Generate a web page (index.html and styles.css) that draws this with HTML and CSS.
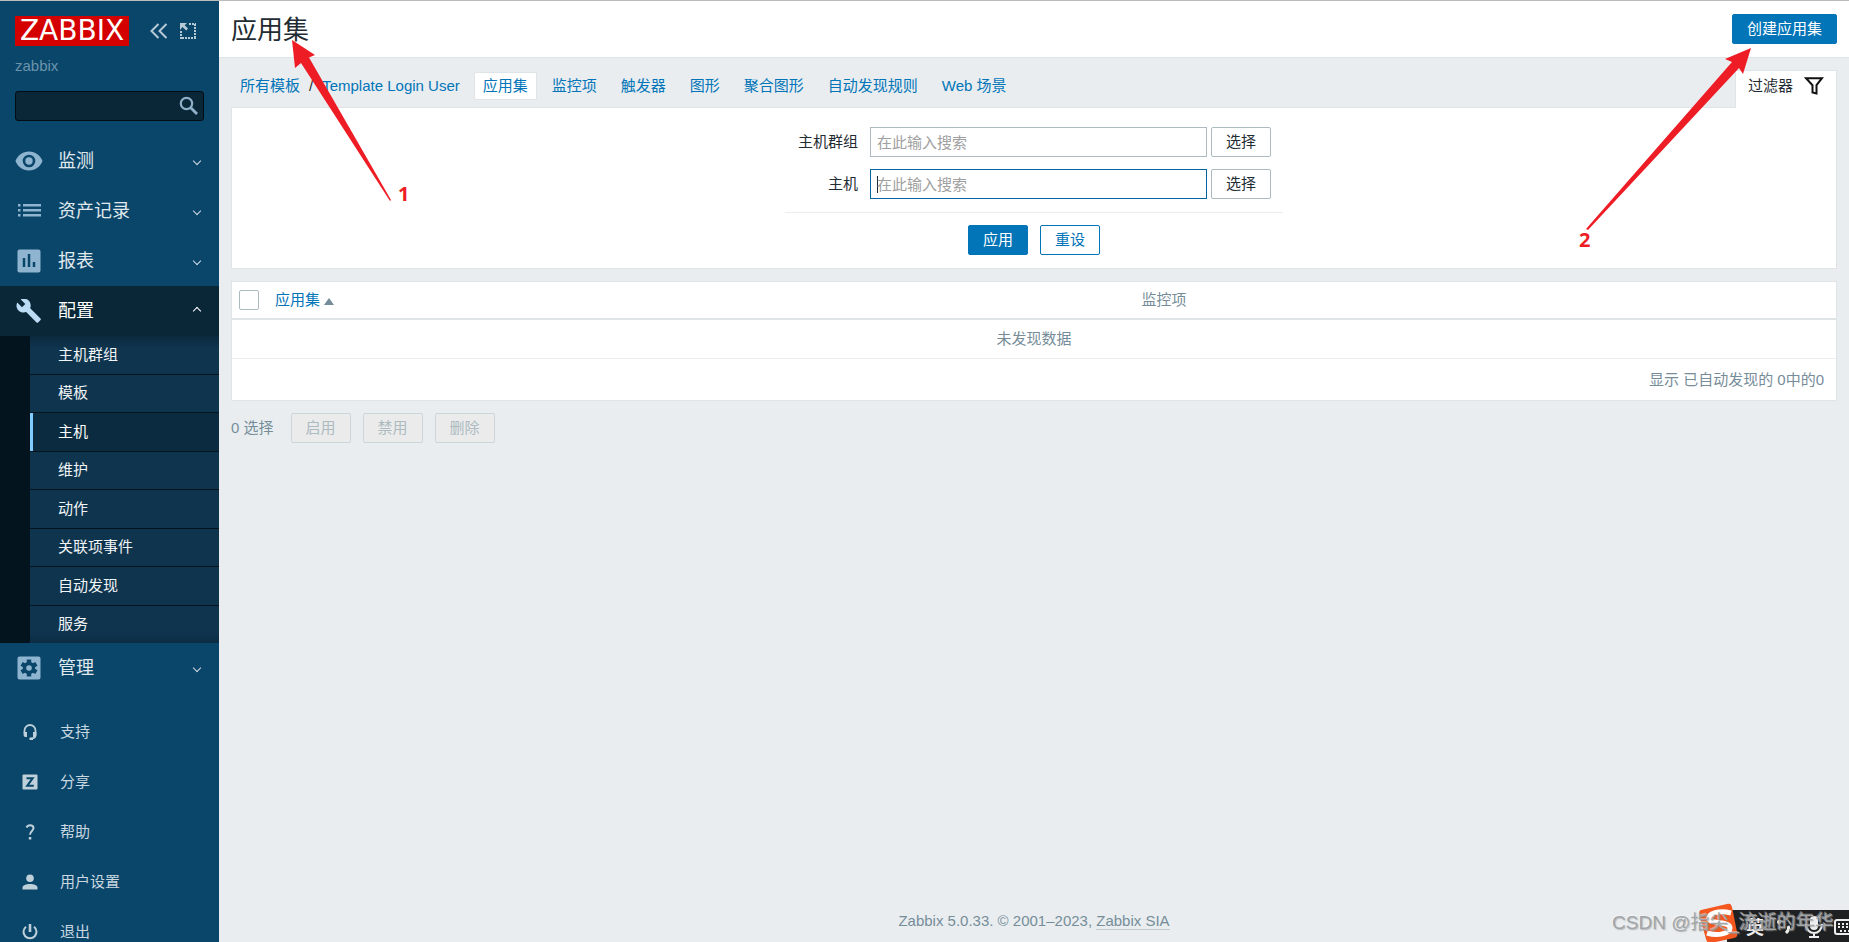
FILE: index.html
```
<!DOCTYPE html>
<html lang="zh-CN">
<head>
<meta charset="utf-8">
<title>应用集</title>
<link rel="stylesheet" href="styles.css">
</head>
<body>
<div class="page">
  <aside class="sidebar">
    <div class="brand">
      <a class="logo" href="#">ZABBIX</a>
      <button class="icon-btn" type="button" aria-label="收起">
        <svg width="18" height="16" viewBox="0 0 18 16" fill="none" stroke="#b6cad6" stroke-width="2"><path d="M8.500 1 1.500 8l7 7M16.500 1l-7 7 7 7"/></svg>
      </button>
      <button class="icon-btn" type="button" aria-label="隐藏">
        <svg width="16" height="16" viewBox="0 0 16 16" fill="none"><path d="M0 0h7L4.700 2.300 8 5.600 6.200 7.400 2.500 4.100 0 7z" fill="#b6cad6"/><path d="M9 1h7M15 1v15M16 15H0M1 16V8" stroke="#b6cad6" stroke-width="2" stroke-dasharray="2 1"/></svg>
      </button>
    </div>
    <div class="server">zabbix</div>
    <form class="search">
      <input class="search-input" type="text" aria-label="搜索">
      <button class="search-btn" type="button" aria-label="搜索">
        <svg width="20" height="20" viewBox="0 0 20 20" fill="none" stroke="#8fb0c9"><circle cx="7.500" cy="7.500" r="5.700" stroke-width="2.200"/><path d="M11.500 11.500l6.500 6.500" stroke-width="2.800"/></svg>
      </button>
    </form>
    <nav>
      <ul class="menu">
        <li><a class="menu-link" href="#">
          <svg width="28" height="20" viewBox="0 0 28 20" fill="#8fb4d0"><path fill-rule="evenodd" d="M14 .5C7.700.5 2.500 4.400.5 10c2 5.600 7.200 9.500 13.500 9.500S25.500 15.600 27.500 10C25.500 4.400 20.300.5 14 .5zm0 15.800a6.300 6.300 0 1 1 0-12.600 6.300 6.300 0 0 1 0 12.600z"/><circle cx="14" cy="10" r="3.700"/></svg>
          <span class="menu-text">监测</span><span class="chevron"></span></a></li>
        <li><a class="menu-link" href="#">
          <svg width="28" height="24" viewBox="0 0 28 24" fill="#8fb4d0"><path d="M3 5h2.500v2.500H3zm0 5h2.500v2.500H3zm0 5h2.500v2.500H3zM8 5h18v2.500H8zm0 5h18v2.500H8zm0 5h18v2.500H8z"/></svg>
          <span class="menu-text">资产记录</span><span class="chevron"></span></a></li>
        <li><a class="menu-link" href="#">
          <svg width="28" height="24" viewBox="0 0 28 24"><rect x="2.500" y=".5" width="23" height="23" rx="2" fill="#8fb4d0"/><path d="M9 9v9M14 5v13M19 13v5" stroke="#0a466a" stroke-width="2.500"/></svg>
          <span class="menu-text">报表</span><span class="chevron"></span></a></li>
        <li><a class="menu-link menu-link-open" href="#">
          <svg width="28" height="24" viewBox="0 0 28 24"><path fill="#bcdcf5" d="M25.500 19.500 15.200 9.200c1-2.600.5-5.600-1.600-7.700C11.400-.6 8-.9 5.600.3l4.700 4.600L7 8.200 2.300 3.600C.9 6.200 1.300 9.300 3.500 11.500c2.100 2.100 5.100 2.600 7.700 1.600l10.300 10.300c.5.500 1.200.5 1.600 0l2.500-2.500c.4-.4.400-1.100-.1-1.400z"/></svg>
          <span class="menu-text">配置</span><span class="chevron chevron-up"></span></a>
          <ul class="submenu">
            <li><a class="sub-link" href="#">主机群组</a></li>
            <li><a class="sub-link" href="#">模板</a></li>
            <li><a class="sub-link sub-link-current" href="#">主机</a></li>
            <li><a class="sub-link" href="#">维护</a></li>
            <li><a class="sub-link" href="#">动作</a></li>
            <li><a class="sub-link" href="#">关联项事件</a></li>
            <li><a class="sub-link" href="#">自动发现</a></li>
            <li><a class="sub-link" href="#">服务</a></li>
          </ul></li>
        <li><a class="menu-link" href="#">
          <svg width="28" height="24" viewBox="0 0 28 24"><rect x="2.500" y=".5" width="23" height="23" rx="2" fill="#8fb4d0"/><g stroke="#0a466a" stroke-width="4.400"><path d="M14 3.500v17M6.600 7.800l14.800 8.400M6.600 16.200l14.800-8.400"/></g><circle cx="14" cy="12" r="6.200" fill="#0a466a"/><circle cx="14" cy="12" r="2.800" fill="#8fb4d0"/></svg>
          <span class="menu-text">管理</span><span class="chevron"></span></a></li>
      </ul>
      <ul class="menu user-menu">
        <li><a class="user-link" href="#">
          <svg width="16" height="16" viewBox="0 0 16 16"><path fill="none" stroke="#bed0da" stroke-width="1.800" d="M2.500 9V6.500a5.500 5.500 0 0 1 11 0V11c0 2-1.500 3.500-4 3.500"/><path fill="#bed0da" d="M1.600 8H5v5H3.500c-1.200 0-1.900-.8-1.900-2zm12.800 0H11v5h1.500c1.200 0 1.900-.8 1.900-2zM7.500 13.500H11V16H7.500z"/></svg>
          <span>支持</span></a></li>
        <li><a class="user-link" href="#">
          <svg width="16" height="16" viewBox="0 0 16 16"><rect x=".5" y=".5" width="15" height="15" rx="1" fill="#bed0da"/><path fill="none" stroke="#0a466a" stroke-width="2" d="M4.500 4.200h6.200L5.200 11.800h6.600"/></svg>
          <span>分享</span></a></li>
        <li><a class="user-link" href="#">
          <svg width="16" height="16" viewBox="0 0 16 16"><path fill="none" stroke="#bed0da" stroke-width="2" d="M4.500 3.500C5.200 1.800 6.500 1.200 8 1.200c2 0 3.500 1.100 3.500 2.900C11.500 7 8 7 8 10.800"/><rect x="6.800" y="13" width="2.500" height="2.500" fill="#bed0da"/></svg>
          <span>帮助</span></a></li>
        <li><a class="user-link" href="#">
          <svg width="16" height="16" viewBox="0 0 16 16" fill="#bed0da"><circle cx="8" cy="4.300" r="3.800"/><path d="M.5 15.500v-1.800C.5 11.300 4 10 8 10s7.500 1.300 7.500 3.700v1.800z"/></svg>
          <span>用户设置</span></a></li>
        <li><a class="user-link" href="#">
          <svg width="16" height="16" viewBox="0 0 16 16" fill="none" stroke="#bed0da" stroke-width="2"><path d="M8 0v8" stroke-width="2.600"/><path d="M4 2.700a6.500 6.500 0 1 0 8 0"/></svg>
          <span>退出</span></a></li>
      </ul>
    </nav>
  </aside>

  <main class="main">
    <header class="header">
      <h1 class="title">应用集</h1>
      <button class="btn btn-primary" type="button">创建应用集</button>
    </header>
    <div class="body">
      <div class="tabs-row">
        <nav class="tabs">
          <span class="crumbs"><a href="#">所有模板</a><span>/</span><a href="#">Template Login User</a></span>
          <a class="tab tab-current" href="#">应用集</a>
          <a class="tab" href="#">监控项</a>
          <a class="tab" href="#">触发器</a>
          <a class="tab" href="#">图形</a>
          <a class="tab" href="#">聚合图形</a>
          <a class="tab" href="#">自动发现规则</a>
          <a class="tab" href="#">Web 场景</a>
        </nav>
        <button class="filter-tab" type="button">过滤器
          <svg width="20" height="20" viewBox="0 0 20 20" fill="none" stroke="#111" stroke-width="2"><path d="M2 2.200h16l-5.500 7v8.300l-4-1V9.200z"/></svg>
        </button>
      </div>
      <form class="filter">
        <div class="fields">
          <label for="groups">主机群组</label>
          <input id="groups" class="field" type="text" placeholder="在此输入搜索">
          <button class="btn btn-grey" type="button">选择</button>
          <label for="hosts">主机</label>
          <input id="hosts" class="field field-active" type="text" placeholder="在此输入搜索">
          <button class="btn btn-grey" type="button">选择</button>
        </div>
        <div class="filter-actions">
          <button class="btn btn-primary" type="button">应用</button>
          <button class="btn btn-alt" type="button">重设</button>
        </div>
      </form>
      <table class="list">
        <thead>
          <tr>
            <th class="col-check"><input class="check" type="checkbox" aria-label="全选"></th>
            <th class="col-name"><a href="#">应用集<span class="sort"></span></a></th>
            <th class="col-items">监控项</th>
          </tr>
        </thead>
        <tbody>
          <tr><td class="empty" colspan="3">未发现数据</td></tr>
          <tr><td class="paging" colspan="3">显示 已自动发现的 0中的0</td></tr>
        </tbody>
      </table>
      <div class="actions">
        <span class="selected">0 选择</span>
        <button class="btn btn-off" type="button" disabled>启用</button>
        <button class="btn btn-off" type="button" disabled>禁用</button>
        <button class="btn btn-off" type="button" disabled>删除</button>
      </div>
    </div>
    <footer class="footer">Zabbix 5.0.33. © 2001–2023, <a href="#">Zabbix SIA</a></footer>
  </main>

  <svg class="note note-left" width="130" height="180" viewBox="0 0 130 180">
    <path fill="#ee1c25" d="M12 10 35 25l-6 2.500L111 170l-1 1L21 33l-6 5z"/>
    <text class="note-text" x="118" y="171">1</text>
  </svg>
  <svg class="note note-right" width="190" height="220" viewBox="0 0 190 220">
    <path fill="#ee1c25" d="M171 18 163 44l-4-6L8 200l-2-1L152 32l-7-3z"/>
    <text class="note-text" x="-1" y="217">2</text>
  </svg>

  <div class="ime">
    <svg width="152" height="40" viewBox="0 0 152 40">
      <path fill="#1f2021" d="M30 8h122v32H30z"/>
      <path fill="#f4581f" d="M4 8 30 2c3-1 4 0 5 3l5 25c1 4 0 5-3 6l-23 5c-3 1-4-1-5-4L2 12c0-2 0-3 2-4z"/>
      <path fill="none" stroke="#fff" stroke-width="5" d="M34 11C22 8 11 11 12 17c1 5 21 2 21 9 0 6-13 8-23 5"/>
      <text class="ime-text" x="49" y="32">英</text>
      <circle cx="82" cy="20" r="2" fill="#eee"/><path fill="none" stroke="#eee" stroke-width="3" d="M91 24q2 3-2 7"/>
      <rect x="113" y="14" width="8" height="14" rx="4" fill="#eee"/><path fill="none" stroke="#eee" stroke-width="2" d="M109 22c0 12 16 12 16 0M117 31v4M112 35h10"/>
      <rect x="138" y="18" width="20" height="14" rx="2" fill="none" stroke="#eee" stroke-width="2"/><path stroke="#eee" stroke-width="2" stroke-dasharray="2 2" d="M141 22h12M141 25h12M143 29h9"/>
    </svg>
  </div>
  <div class="watermark">CSDN @指尖_流逝的年华</div>
</div>
</body>
</html>
```
FILE: styles.css
```
* { box-sizing: border-box; }

body {
  margin: 0;
  font: 15px/20px "Liberation Sans", "Noto Sans CJK SC", sans-serif;
  color: #1f2c33;
  background: #e9edf0;
}

a { color: #0275b8; text-decoration: none; }
ul { list-style: none; margin: 0; padding: 0; }
button, input { font: inherit; margin: 0; }

.page {
  position: relative;
  display: flex;
  height: 100vh;
  overflow: hidden;
  border-top: 1px solid #bcbcbc;
}

/* Sidebar */
.sidebar {
  flex: 0 0 219px;
  overflow: hidden;
  background: #0a466a;
}

.brand {
  display: flex;
  align-items: center;
  gap: 12px;
  padding: 15px 15px 0;
}

.logo {
  flex: none;
  width: 114px;
  height: 30px;
  margin-right: 9px;
  background: #d40000;
  color: #fff;
  font: 28px/30px "DejaVu Sans", sans-serif;
  text-align: center;
}

.icon-btn {
  display: flex;
  flex: none;
  padding: 0;
  border: 0;
  background: none;
}

.server { padding: 10px 15px 0; color: #6b94ad; }

.search { position: relative; margin: 15px; }

.search-input {
  display: block;
  width: 100%;
  height: 30px;
  padding: 0 36px 0 8px;
  border: 1px solid #020d14;
  border-radius: 3px;
  background: #0a2738;
  color: #fff;
}

.search-btn {
  position: absolute;
  top: 5px;
  right: 5px;
  display: flex;
  padding: 0;
  border: 0;
  background: none;
}

.menu-link {
  display: flex;
  align-items: center;
  height: 50px;
  padding: 0 18px 0 15px;
  color: #e0e9ee;
  font-size: 18px;
}

.menu-link-open { background: #0a2738; color: #fff; }
.menu-text { flex: 1; padding-left: 15px; }

.chevron {
  width: 6px;
  height: 6px;
  margin-right: 1px;
  border: solid #d0dde5;
  border-width: 0 1px 1px 0;
  transform: rotate(45deg);
}

.chevron-up {
  border-color: #fff;
  border-width: 1px 0 0 1px;
}

.submenu {
  display: grid;
  grid-auto-rows: 1fr;
  gap: 1px;
  min-height: 307px;
  padding-left: 30px;
  background: #03141e;
}

.submenu li { display: grid; background: #0f344d; }
.submenu li:first-child { background: linear-gradient(#0b2a3f, #0f344d 12px); }
.submenu li:last-child { background: linear-gradient(#0f344d 26px, #0b2d45); }

.sub-link {
  display: flex;
  align-items: center;
  padding-left: 28px;
  color: #f0f4f7;
}

.sub-link-current {
  padding-left: 25px;
  border-left: 3px solid #80cbff;
  background: #0a2b40;
  color: #fff;
}

.user-menu { padding-top: 14px; }

.user-link {
  display: flex;
  align-items: center;
  gap: 22px;
  height: 50px;
  padding-left: 22px;
  color: #c8d7e0;
}

/* Main column */
.main {
  flex: 1;
  min-width: 0;
  display: flex;
  flex-direction: column;
}

.header {
  display: flex;
  justify-content: space-between;
  align-items: center;
  height: 57px;
  padding: 0 12px;
  border-bottom: 1px solid #dfe4e7;
  background: #fff;
}

.title { margin: 0; padding-top: 2px; font-size: 26px; line-height: 32px; font-weight: 400; }

.btn {
  height: 30px;
  padding: 0 14px;
  border: 1px solid #0275b8;
  border-radius: 2px;
  background: #fff;
  line-height: 20px;
  white-space: nowrap;
}

.btn-primary { background: #0275b8; color: #fff; }
.btn-alt { color: #0275b8; }
.btn-grey { border-color: #acbbc2; color: #1f2c33; }
.btn-off { border-color: #ccd5d9; background: #ebebeb; color: #acbbc2; }

.body { padding: 12px 12px 0; }

.tabs-row {
  display: flex;
  justify-content: space-between;
}

.tabs { display: flex; align-items: center; padding: 0 0 6px 9px; }
.crumbs { display: flex; gap: 9px; margin-right: 14px; }

.tab {
  padding: 3px 8px;
  margin-right: 6px;
  border: 1px solid transparent;
  border-radius: 2px;
}

.tab-current { border-color: #dfe4e7; background: #fff; }

.filter-tab {
  position: relative;
  z-index: 1;
  display: flex;
  align-items: center;
  gap: 11px;
  height: 38px;
  margin-bottom: -1px;
  padding: 0 12px 8px;
  border: 1px solid #dfe4e7;
  border-bottom: 0;
  background: #fff;
  color: #1f2c33;
}

.filter {
  display: flex;
  flex-direction: column;
  align-items: center;
  padding: 19px 0 13px;
  border: 1px solid #dfe4e7;
  background: #fff;
}

.fields {
  display: grid;
  grid-template-columns: 69px 337px 60px;
  column-gap: 4px;
  row-gap: 12px;
  align-items: center;
  padding: 0 12px 13px;
  border-bottom: 1px solid #e9edf0;
}

.fields label { padding-right: 8px; text-align: right; white-space: nowrap; }

.field {
  width: 100%;
  height: 30px;
  padding: 0 6px;
  border: 1px solid #acbbc2;
  color: #1f2c33;
}

.field::placeholder { color: #a0a0a0; opacity: 1; }

.field-active {
  border-color: #02659f;
  background: linear-gradient(#1f2c33, #1f2c33) 6px center / 1px 17px no-repeat #fff;
}

.filter-actions { display: flex; gap: 12px; padding-top: 12px; }

/* List */
.list {
  width: 100%;
  margin-top: 12px;
  border: 1px solid #dfe4e7;
  border-collapse: separate;
  border-spacing: 0;
  background: #fff;
  color: #768d99;
}

.list th {
  height: 38px;
  padding: 0;
  border-bottom: 2px solid #dfe4e7;
  font-weight: 400;
  text-align: left;
}

.list .col-check { width: 43px; padding-left: 7px; }
.col-items { width: 43.3%; }

.check {
  display: block;
  width: 20px;
  height: 20px;
  border: 1px solid #acbbc2;
  border-radius: 2px;
  background: #fff;
  appearance: none;
}

.sort {
  display: inline-block;
  margin-left: 4px;
  border: 5px solid transparent;
  border-top: 0;
  border-bottom: 7px solid #768d99;
}

.list td { padding: 0 12px; }
.list .empty { height: 39px; border-bottom: 1px solid #ebeef0; text-align: center; }
.list .paging { height: 41px; text-align: right; }

.actions {
  display: flex;
  align-items: center;
  gap: 12px;
  padding-top: 12px;
  color: #768d99;
}

.selected { margin-right: 5px; }

.footer { margin-top: auto; padding-bottom: 11px; text-align: center; color: #768d99; }
.footer a { color: inherit; border-bottom: 1px solid #c0cacf; }

/* Overlays */
.note { position: absolute; z-index: 2; overflow: visible; pointer-events: none; }
.note-left { top: 29px; left: 280px; }
.note-right { top: 29px; right: 79px; }
.note-text { fill: #ee1c25; font: 700 20px "Open Sans", sans-serif; }

.ime { position: absolute; right: 0; bottom: 0; z-index: 2; display: flex; }
.ime-text { fill: #eee; font: 700 18px "Noto Sans CJK SC", sans-serif; }

.watermark {
  position: absolute;
  right: 15px;
  bottom: 7px;
  z-index: 3;
  color: #a2a5a8;
  font: 19px/24px "Liberation Sans", "Noto Sans CJK SC", sans-serif;
  text-shadow: -1px -1px 0 #fff6, 1px 1px 1px #8888;
}
```
